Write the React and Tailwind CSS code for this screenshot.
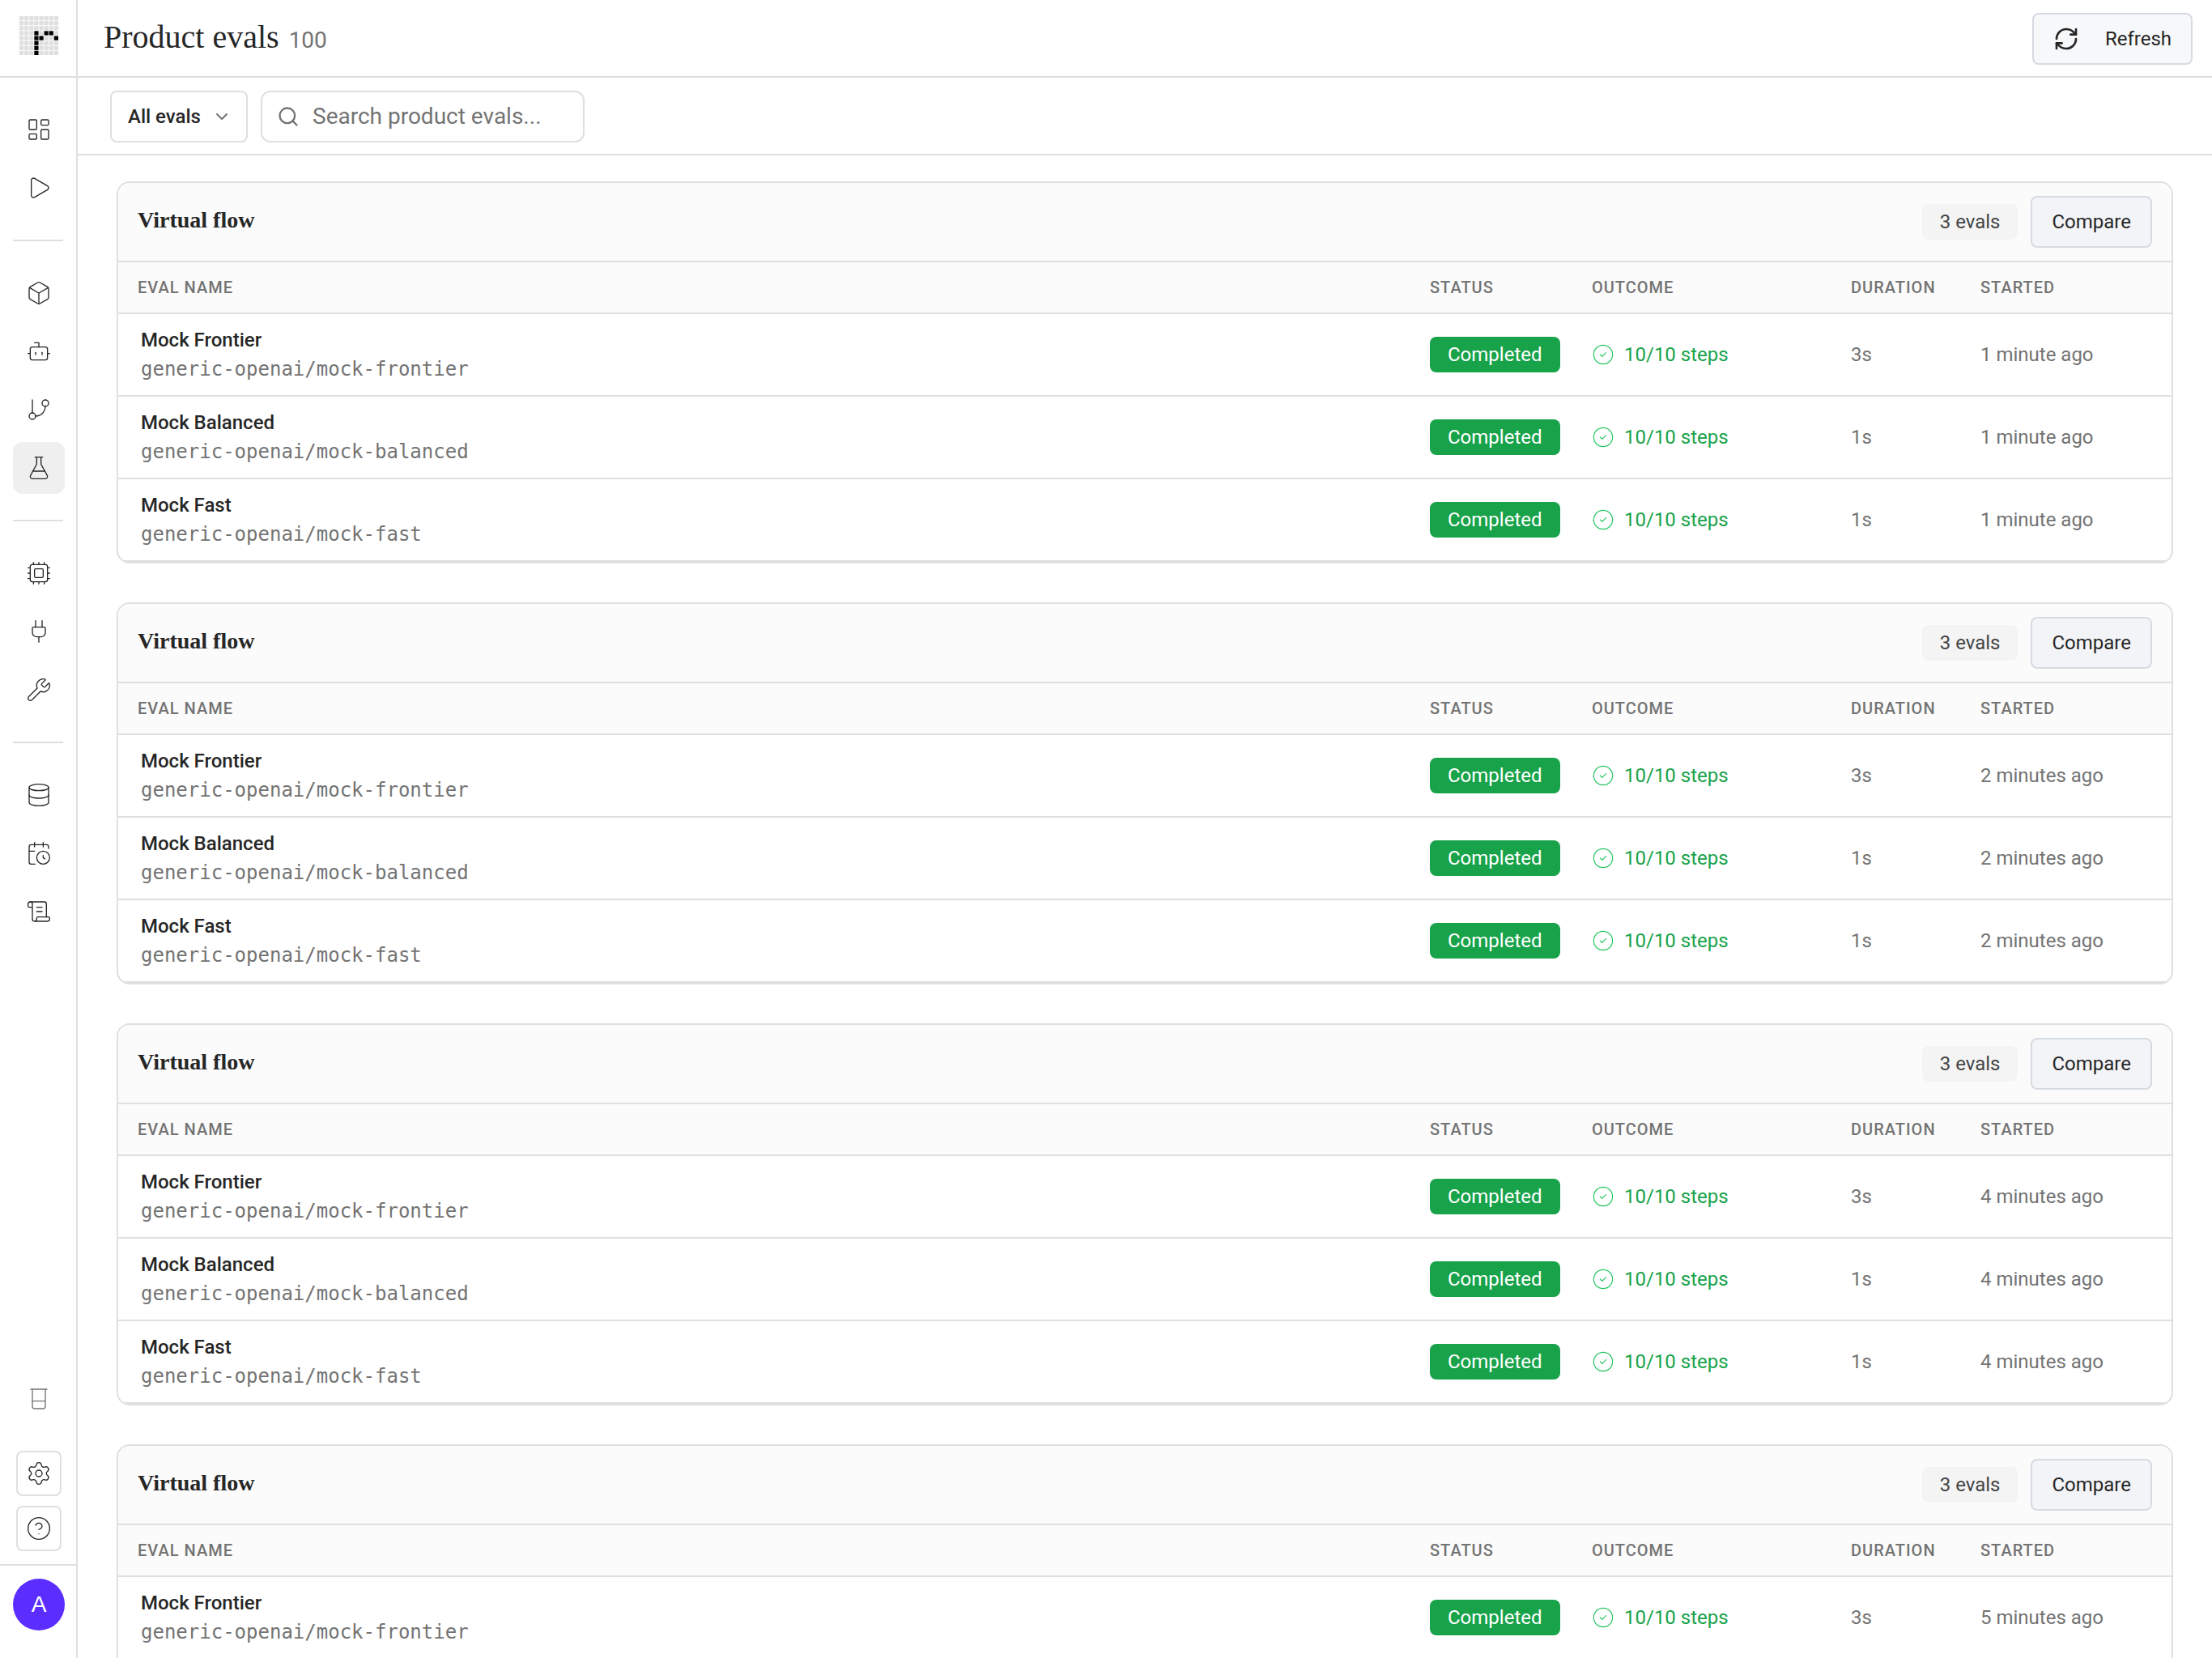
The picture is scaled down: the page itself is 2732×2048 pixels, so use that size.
import {
  Beaker,
  Bot,
  Box,
  CalendarClock,
  ChevronDown,
  CircleCheck,
  CircleQuestionMark,
  Cpu,
  Database,
  FlaskConical,
  GitBranch,
  LayoutDashboard,
  Play,
  Plug,
  RefreshCw,
  ScrollText,
  Search,
  Settings,
  Wrench,
} from "lucide-react";

const navGroups = [
  [
    { label: "Dashboard", icon: LayoutDashboard },
    { label: "Runs", icon: Play },
  ],
  [
    { label: "Products", icon: Box },
    { label: "Agents", icon: Bot },
    { label: "Flows", icon: GitBranch },
    { label: "Evals", icon: FlaskConical, active: true },
  ],
  [
    { label: "Models", icon: Cpu },
    { label: "Integrations", icon: Plug },
    { label: "Tools", icon: Wrench },
  ],
  [
    { label: "Data", icon: Database },
    { label: "Schedules", icon: CalendarClock },
    { label: "Logs", icon: ScrollText },
  ],
];

const mockEvals = [
  { name: "Mock Frontier", model: "generic-openai/mock-frontier", duration: "3s" },
  { name: "Mock Balanced", model: "generic-openai/mock-balanced", duration: "1s" },
  { name: "Mock Fast", model: "generic-openai/mock-fast", duration: "1s" },
];

const groups = [
  { id: 1, title: "Virtual flow", started: "1 minute ago", evals: mockEvals },
  { id: 2, title: "Virtual flow", started: "2 minutes ago", evals: mockEvals },
  { id: 3, title: "Virtual flow", started: "4 minutes ago", evals: mockEvals },
  { id: 4, title: "Virtual flow", started: "5 minutes ago", evals: mockEvals },
];

// lit cells of the 8x8 dot grid
const logoRows = [
  "........",
  "........",
  "........",
  "...#.##.",
  "...##..#",
  "...#....",
  "...#....",
  "...#....",
];

function Logo() {
  return (
    <svg viewBox="0 0 55 55" className="size-12" aria-hidden="true">
      {logoRows.map((row, y) =>
        row.split("").map((cell, x) => (
          <rect
            key={`${x}-${y}`}
            x={x * 7}
            y={y * 7}
            width="6"
            height="6"
            fill={cell === "#" ? "#000000" : "#dfdfdf"}
          />
        ))
      )}
    </svg>
  );
}

function Sidebar() {
  return (
    <aside className="flex w-24 shrink-0 flex-col border-r-2 border-[#dfdfdf]">
      <a
        href="#home"
        aria-label="Home"
        className="flex h-24 shrink-0 border-b-2 border-[#dfdfdf] pt-5 pl-6"
      >
        <Logo />
      </a>
      <nav className="flex flex-1 flex-col gap-8 px-4 pt-8">
        {navGroups.map((items, i) => (
          <div key={i} className="flex flex-col gap-8">
            {i > 0 && <hr className="border-t-2 border-[#dfdfdf]" />}
            <ul className="flex flex-col gap-2">
              {items.map(({ label, icon: Icon, active }) => (
                <li key={label}>
                  <a
                    href={`#${label.toLowerCase()}`}
                    aria-label={label}
                    className={`flex size-16 items-center justify-center rounded-xl ${
                      active ? "bg-[#efefef]" : ""
                    }`}
                  >
                    <Icon className="size-8" strokeWidth={1} />
                  </a>
                </li>
              ))}
            </ul>
          </div>
        ))}
      </nav>
      <div className="flex flex-col gap-3 px-5 pb-4">
        <button
          type="button"
          aria-label="Labs"
          className="mb-6 flex size-14 items-center justify-center text-[#737373]"
        >
          <Beaker className="size-8" strokeWidth={1} />
        </button>
        <button
          type="button"
          aria-label="Settings"
          className="flex size-14 items-center justify-center rounded-lg border-2 border-[#dfdfdf]"
        >
          <Settings className="size-8 shrink-0" strokeWidth={1} />
        </button>
        <button
          type="button"
          aria-label="Help"
          className="flex size-14 items-center justify-center rounded-lg border-2 border-[#dfdfdf]"
        >
          <CircleQuestionMark className="size-8 shrink-0" strokeWidth={1} />
        </button>
      </div>
      <div className="border-t-2 border-[#dfdfdf] px-4 pt-4 pb-[34px]">
        <button
          type="button"
          className="flex size-16 items-center justify-center rounded-full bg-[#5b2eff] font-['Liberation_Sans',sans-serif] text-[28px] text-white"
        >
          A
        </button>
      </div>
    </aside>
  );
}

function HeadCell({ children }) {
  return (
    <th className="h-16 border-b-2 border-[#dfdfdf] pl-6 font-medium tracking-wider">
      {children}
    </th>
  );
}

function Cell({ children }) {
  return (
    <td className="h-[102px] border-b-2 border-[#dfdfdf] pl-6">{children}</td>
  );
}

function EvalGroup({ group }) {
  return (
    <section className="shrink-0 overflow-hidden rounded-2xl border-2 border-[#dfdfdf] bg-white">
      <div className="flex items-center justify-between border-b-2 border-[#dfdfdf] bg-[#fbfbfb] px-6 py-4">
        <h2 className="pb-1 font-['Liberation_Serif',serif] text-[28px] leading-9 font-bold">
          {group.title}
        </h2>
        <div className="flex items-center gap-4">
          <span className="flex h-11 items-center rounded-lg bg-[#f4f4f4] px-[22px] text-[#444444]">
            {group.evals.length} evals
          </span>
          <button
            type="button"
            className="h-16 rounded-lg border-2 border-[#d6dbe2] bg-[#f3f4f7] px-6"
          >
            Compare
          </button>
        </div>
      </div>
      <table className="w-full table-fixed border-separate border-spacing-0 text-left">
        <colgroup>
          <col />
          <col className="w-[200px]" />
          <col className="w-[320px]" />
          <col className="w-[160px]" />
          <col className="w-[260px]" />
        </colgroup>
        <thead className="bg-[#fbfbfb] text-[20px] text-[#737373] uppercase">
          <tr>
            <HeadCell>Eval name</HeadCell>
            <HeadCell>Status</HeadCell>
            <HeadCell>Outcome</HeadCell>
            <HeadCell>Duration</HeadCell>
            <HeadCell>Started</HeadCell>
          </tr>
        </thead>
        <tbody className="text-[#737373]">
          {group.evals.map((item) => (
            <tr key={item.name}>
              <Cell>
                <a href="#eval" className="block px-1">
                  <span className="block font-medium text-[#262626]">
                    {item.name}
                  </span>
                  <span className="block font-['DejaVu_Sans_Mono',monospace]">
                    {item.model}
                  </span>
                </a>
              </Cell>
              <Cell>
                <span className="inline-flex h-11 items-center rounded-lg bg-[#18a34a] px-[22px] align-middle text-white">
                  Completed
                </span>
              </Cell>
              <Cell>
                <span className="flex items-center gap-3 text-[#18a34a]">
                  <CircleCheck className="size-7 text-[#22c55e]" strokeWidth={1} />
                  10/10 steps
                </span>
              </Cell>
              <Cell>{item.duration}</Cell>
              <Cell>{group.started}</Cell>
            </tr>
          ))}
        </tbody>
      </table>
    </section>
  );
}

export default function App() {
  return (
    <div className="flex h-screen overflow-hidden bg-white font-['Roboto',sans-serif] text-[24px] leading-9 text-[#262626]">
      <Sidebar />
      <div className="flex min-w-0 flex-1 flex-col">
        <header className="flex h-24 shrink-0 items-center justify-between border-b-2 border-[#dfdfdf] pt-0.5 pr-6 pl-8">
          <div className="flex items-baseline gap-3 pb-1">
            <h1 className="font-['Liberation_Serif',serif] text-[40px] leading-12">
              Product evals
            </h1>
            <span className="text-[28px] text-[#737373]">100</span>
          </div>
          <button
            type="button"
            className="flex h-16 items-center gap-8 rounded-lg border-2 border-[#d6dbe2] bg-[#f7f8fa] px-6"
          >
            <RefreshCw className="size-8" />
            Refresh
          </button>
        </header>
        <div className="flex h-24 shrink-0 items-center gap-4 border-b-2 border-[#dfdfdf] px-10 pt-0.5">
          <div className="relative">
            <select
              aria-label="Filter evals"
              className="h-16 appearance-none rounded-lg border-2 border-[#dfdfdf] bg-white pr-14 pl-5 font-medium"
            >
              <option>All evals</option>
              <option>Passed</option>
              <option>Failed</option>
            </select>
            <ChevronDown className="pointer-events-none absolute top-5 right-5 size-6 text-[#737373]" />
          </div>
          <label className="flex h-16 w-[400px] items-center gap-4 rounded-xl border-2 border-[#dfdfdf] px-[18px]">
            <Search className="size-7 shrink-0 text-[#737373]" />
            <input
              type="text"
              aria-label="Search product evals"
              placeholder="Search product evals..."
              className="min-w-0 flex-1 bg-transparent text-[28px] outline-none placeholder:text-[#737373]"
            />
          </label>
        </div>
        <main className="flex min-h-0 flex-1 flex-col gap-12 overflow-y-auto px-12 py-8 [scrollbar-width:none]">
          {groups.map((group) => (
            <EvalGroup key={group.id} group={group} />
          ))}
        </main>
      </div>
    </div>
  );
}
